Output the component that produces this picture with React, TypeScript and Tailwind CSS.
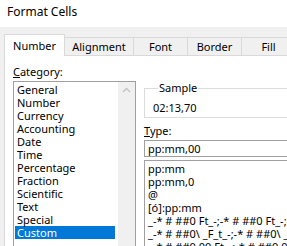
import React from "react";

const categories = [
  "General",
  "Number",
  "Currency",
  "Accounting",
  "Date",
  "Time",
  "Percentage",
  "Fraction",
  "Scientific",
  "Text",
  "Special",
  "Custom",
];

const types = [
  "pp:mm",
  "pp:mm,0",
  "@",
  "[ó]:pp:mm",
  "_-* # ##0 Ft_-;-* # ##0 Ft_-;-* \"-\" Ft_-;_-@_-",
  "_-* # ##0\\ _F_t_-;-* # ##0\\ _F_t_-;_-* \"-\"\\ _F_t_-;_-@_-",
  "_-* # ##0,00 Ft_-;-* # ##0,00 Ft_-;_-* \"-\"?? Ft_-;_-@_-",
];

export default function App() {
  return (
    <div className="w-[287px] h-[246px] overflow-hidden bg-[#f0f0f0] text-black text-[11px] font-['Noto_Sans',sans-serif]">
      <div className="h-[27px] bg-white pl-[7px] pt-[3px] text-[12px] leading-[18px]">Format Cells</div>
      <div className="flex items-end h-[28px] pl-[4px]">
        <div className="relative z-10 -mb-px flex h-[22px] w-[61px] shrink-0 items-center justify-center border border-b-0 border-[#d9d9d9] bg-white pt-[1px] leading-[14px]">
          Number
        </div>
        <div className="flex h-[18px] w-[69px] shrink-0 items-center justify-center border-t border-r border-[#d9d9d9] pt-[1px] leading-[14px]">
          Alignment
        </div>
        <div className="flex h-[18px] w-[54px] shrink-0 items-center justify-center border-t border-r border-[#d9d9d9] pt-[1px] leading-[14px]">
          Font
        </div>
        <div className="flex h-[18px] w-[54px] shrink-0 items-center justify-center border-t border-r border-[#d9d9d9] pt-[1px] leading-[14px]">
          Border
        </div>
        <div className="flex h-[18px] w-[54px] shrink-0 items-center justify-center border-t border-r border-[#d9d9d9] pt-[1px] leading-[14px]">
          Fill
        </div>
      </div>
      <div className="ml-[4px] h-[200px] border-t border-l border-[#d9d9d9] bg-white pl-[8px] pt-[9px] flex gap-[8px]">
        <div className="flex w-[123px] shrink-0 flex-col">
          <div className="h-[14px] leading-[14px] mb-[2px]">
            <span className="underline">C</span>ategory:
          </div>
          <div className="flex h-[170px] border border-[#a0a0a0]">
            <div className="flex-1 pl-[1px] pt-[1px]">
              {categories.map((c) => (
                <div
                  key={c}
                  className={
                    c === "Custom"
                      ? "h-[13px] w-[100px] bg-[#0078d7] pl-[2px] leading-[13px] text-white"
                      : "h-[13px] w-[100px] pl-[2px] leading-[13px]"
                  }
                >
                  {c}
                </div>
              ))}
            </div>
            <div className="w-[17px] bg-[#f0f0f0] flex justify-center pt-[5px]">
              <svg width="9" height="6" viewBox="0 0 9 6">
                <path d="M1 5 L4.5 1.5 L8 5" fill="none" stroke="#c2c2c2" strokeWidth="1.3" />
              </svg>
            </div>
          </div>
        </div>
        <div className="flex flex-1 flex-col pt-[16px] min-w-0">
          <fieldset className="border border-[#dcdcdc] pl-[8px] pb-[2px] w-[160px]">
            <legend className="ml-[5px] px-[1px] leading-[14px]">Sample</legend>
            <div className="mt-[6px] leading-[14px]">02:13,70</div>
          </fieldset>
          <div className="mt-[6px] h-[14px] leading-[14px]">
            <span className="underline">T</span>ype:
          </div>
          <div className="mt-[2px] h-[17px] w-[160px] border border-[#a0a0a0] pl-[3px] leading-[15px] whitespace-nowrap">
            pp:mm,00
          </div>
          <div className="mt-[3px] h-[100px] w-[160px] border border-[#a0a0a0] pl-[3px] pt-[1px] overflow-hidden">
            {types.map((t) => (
              <div key={t} className="h-[13px] leading-[13px] whitespace-nowrap">
                {t}
              </div>
            ))}
          </div>
        </div>
      </div>
    </div>
  );
}
